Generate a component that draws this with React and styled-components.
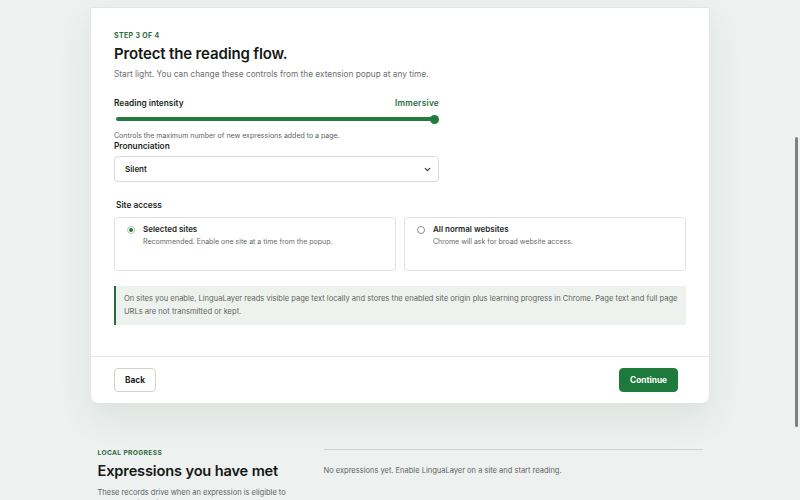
import React from 'react';
import styled, { createGlobalStyle } from 'styled-components';
import { ChevronDown } from 'lucide-react';

const GlobalStyle = createGlobalStyle`
  html, body {
    margin: 0;
    background: #eef1ef;
    overflow: hidden;
  }
  body {
    font-family: Inter, 'Noto Sans', sans-serif;
    color: #1c1f1d;
    -webkit-font-smoothing: antialiased;
  }
  * {
    box-sizing: border-box;
  }
`;

const Page = styled.div`
  display: flex;
  flex-direction: column;
  align-items: center;
  padding-top: 7px;
  height: 500px;
`;

const Card = styled.section`
  width: 620px;
  background: #ffffff;
  border: 1px solid #e3e6e4;
  border-radius: 2px 2px 8px 8px;
  box-shadow: 0 14px 34px rgba(30, 50, 40, 0.08);
`;

const Body = styled.div`
  display: flex;
  flex-direction: column;
  padding: 23px 23px 31px;
`;

const Eyebrow = styled.div`
  font-size: ${(p) => p.$size || 7}px;
  line-height: 10px;
  font-weight: 700;
  letter-spacing: 0.05em;
  text-transform: uppercase;
  color: #2c6a3f;
`;

const Title = styled.h1`
  margin: 3px 0 0;
  font-size: 15px;
  line-height: 20px;
  font-weight: 600;
  letter-spacing: -0.01em;
  color: #151816;
`;

const Lead = styled.p`
  margin: 4px 0 0;
  font-size: 8.3px;
  line-height: 12px;
  color: #6b706c;
`;

const Field = styled.div`
  width: 325px;
  display: flex;
  flex-direction: column;
  margin-top: ${(p) => p.$top || 0}px;
`;

const LabelRow = styled.div`
  display: flex;
  justify-content: space-between;
  align-items: center;
`;

const Label = styled.div`
  font-size: 8.3px;
  line-height: 12px;
  font-weight: 600;
  letter-spacing: ${(p) => (p.$accent ? '0.03em' : '0')};
  color: ${(p) => (p.$accent ? '#2c6a3f' : '#1c1f1d')};
  padding-left: ${(p) => p.$indent || 0}px;
`;

const Slider = styled.div`
  position: relative;
  height: 10px;
  margin: 5px 2px 0;
  display: flex;
  align-items: center;
`;

const Track = styled.div`
  flex: 1;
  height: 4px;
  border-radius: 2px;
  background: #277a41;
`;

const Thumb = styled.span`
  position: absolute;
  right: -2px;
  top: 0.5px;
  width: 9px;
  height: 9px;
  border-radius: 50%;
  background: #237b40;
`;

const Help = styled.div`
  margin-top: 7px;
  font-size: 7px;
  line-height: 9px;
  color: #5e635f;
`;

const SelectBox = styled.div`
  margin-top: 4px;
  height: 26px;
  border: 1px solid #d9dcda;
  border-radius: 4px;
  padding: 0 6px 0 10px;
  display: flex;
  align-items: center;
  justify-content: space-between;
  font-size: 8px;
  font-weight: 600;
  color: #1c1f1d;
`;

const Options = styled.div`
  margin-top: 6px;
  display: grid;
  grid-template-columns: 1fr 1fr;
  gap: 8px;
`;

const Choice = styled.div`
  height: 54px;
  border: 1px solid #dfe2e0;
  border-radius: 4px;
  padding: 6px 12px;
  display: flex;
  gap: 8px;
  align-items: flex-start;
`;

const Radio = styled.span`
  flex: none;
  width: 8px;
  height: 8px;
  margin-top: 2px;
  border-radius: 50%;
  border: 1px solid ${(p) => (p.$on ? '#b9c8bd' : '#8d918e')};
  display: flex;
  align-items: center;
  justify-content: center;
  &::after {
    content: '';
    width: 4px;
    height: 4px;
    border-radius: 50%;
    background: ${(p) => (p.$on ? '#1f7a3c' : 'transparent')};
  }
`;

const ChoiceText = styled.div`
  display: flex;
  flex-direction: column;
  gap: 2px;
`;

const ChoiceTitle = styled.div`
  font-size: 8px;
  line-height: 11px;
  font-weight: 600;
  color: #1c1f1d;
`;

const ChoiceDesc = styled.div`
  font-size: 7px;
  line-height: 9px;
  color: #666b67;
`;

const Notice = styled.div`
  margin-top: 15px;
  background: #eef2ef;
  border-left: 2px solid #2c6a3f;
  padding: 6px 1px 7px 8px;
  font-size: 7.55px;
  line-height: 13px;
  color: #5f6560;
`;

const Footer = styled.div`
  border-top: 1px solid #e4e7e5;
  padding: 11px 31px 11px 23px;
  display: flex;
  justify-content: space-between;
  align-items: center;
`;

const Button = styled.button`
  height: 24px;
  padding: 0 10px;
  border-radius: 4px;
  border: 1px solid ${(p) => (p.$primary ? '#1f7a3c' : '#cfd3d0')};
  background: ${(p) => (p.$primary ? '#1e7a3c' : '#ffffff')};
  color: ${(p) => (p.$primary ? '#ffffff' : '#1c1f1d')};
  font-family: inherit;
  font-size: 8.3px;
  font-weight: 700;
`;

const Progress = styled.section`
  width: 605px;
  margin-top: 44px;
  display: grid;
  grid-template-columns: 202px 1fr;
  gap: 24px;
`;

const ProgressIntro = styled.div`
  display: flex;
  flex-direction: column;
`;

const ProgressTitle = styled.h2`
  margin: 3px 0 0;
  font-size: 14.6px;
  line-height: 20px;
  font-weight: 600;
  letter-spacing: -0.01em;
  color: #151816;
`;

const ProgressLead = styled.p`
  margin: 6px 0 0;
  font-size: 7.5px;
  line-height: 11px;
  color: #5e635f;
`;

const ProgressList = styled.div`
  border-top: 1px solid #cfd3d0;
  margin-top: 1px;
  padding-top: 16px;
  font-size: 7.5px;
  line-height: 10px;
  color: #5e635f;
`;

const ScrollThumb = styled.div`
  position: fixed;
  right: 2px;
  top: 137px;
  width: 3px;
  height: 290px;
  border-radius: 2px;
  background: #7f817f;
`;

const App = () => {
  return (
    <>
      <GlobalStyle />
      <Page>
        <Card>
          <Body>
            <Eyebrow>Step 3 of 4</Eyebrow>
            <Title>Protect the reading flow.</Title>
            <Lead>
              Start light. You can change these controls from the extension popup at any time.
            </Lead>

            <Field $top={17}>
              <LabelRow>
                <Label>Reading intensity</Label>
                <Label $accent>Immersive</Label>
              </LabelRow>
              <Slider>
                <Track />
                <Thumb />
              </Slider>
              <Help>Controls the maximum number of new expressions added to a page.</Help>
              <Label>Pronunciation</Label>
              <SelectBox>
                <span>Silent</span>
                <ChevronDown size={9} strokeWidth={3} color="#333" />
              </SelectBox>
            </Field>

            <Field $top={17}>
              <Label $indent={2}>Site access</Label>
            </Field>
            <Options>
              <Choice>
                <Radio $on />
                <ChoiceText>
                  <ChoiceTitle>Selected sites</ChoiceTitle>
                  <ChoiceDesc>Recommended. Enable one site at a time from the popup.</ChoiceDesc>
                </ChoiceText>
              </Choice>
              <Choice>
                <Radio />
                <ChoiceText>
                  <ChoiceTitle>All normal websites</ChoiceTitle>
                  <ChoiceDesc>Chrome will ask for broad website access.</ChoiceDesc>
                </ChoiceText>
              </Choice>
            </Options>

            <Notice>
              On sites you enable, LinguaLayer reads visible page text locally and stores the
              enabled site origin plus learning progress in Chrome. Page text and full page URLs
              are not transmitted or kept.
            </Notice>
          </Body>
          <Footer>
            <Button>Back</Button>
            <Button $primary>Continue</Button>
          </Footer>
        </Card>

        <Progress>
          <ProgressIntro>
            <Eyebrow $size={6.7}>Local progress</Eyebrow>
            <ProgressTitle>Expressions you have met</ProgressTitle>
            <ProgressLead>
              These records drive when an expression is eligible to appear again while you read.
            </ProgressLead>
          </ProgressIntro>
          <ProgressList>
            No expressions yet. Enable LinguaLayer on a site and start reading.
          </ProgressList>
        </Progress>
      </Page>
      <ScrollThumb />
    </>
  );
};

export default App;
